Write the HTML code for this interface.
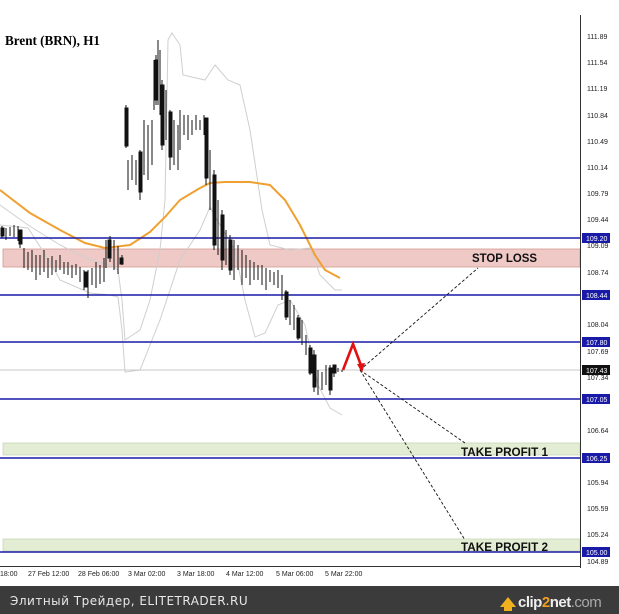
<!DOCTYPE html><html><head><style>
body{margin:0;width:619px;height:614px;overflow:hidden;background:#fff;font-family:"Liberation Sans",sans-serif}
</style></head><body>
<svg width="619" height="614" viewBox="0 0 619 614" xmlns="http://www.w3.org/2000/svg" style="position:absolute;left:0;top:0">
<rect x="0" y="0" width="619" height="586" fill="#fff"/>
<rect x="3" y="249" width="577" height="18" fill="#eec9c6" stroke="#d49a95" stroke-width="0.8"/>
<rect x="3" y="443" width="577" height="12" fill="#e3edd3" stroke="#c9d8b6" stroke-width="0.8"/>
<rect x="3" y="539" width="577" height="12" fill="#e3edd3" stroke="#c9d8b6" stroke-width="0.8"/>
<g fill="none" stroke="#cfcfcf" stroke-width="1">
<path d="M0,205 L28,225 L60,245 L90,260 L110,265 L118,270 L122,300 L125,340 L140,330 L150,300 L160,250 L165,200 L168,40 L172,33 L180,45 L183,75 L205,80 L215,65 L228,80 L240,85 L250,130 L262,210 L270,245 L290,250 L310,248 L320,275 L335,290 L342,290"/>
<path d="M0,225 L28,228 L50,262 L60,280 L90,293 L110,295 L118,297 L122,330 L125,372 L140,370 L160,320 L180,260 L200,230 L210,207 L220,225 L235,250 L245,300 L255,337 L265,333 L278,305 L290,300 L305,325 L318,385 L330,408 L342,415"/>
</g>
<path d="M0,190 L30,213 L60,230 L85,243 L105,248 L130,245 L150,232 L165,217 L180,200 L200,188 L210,183 L225,182 L250,182 L270,185 L285,200 L300,225 L315,255 L325,270 L340,278" fill="none" stroke="#f0a030" stroke-width="2"/>
<g stroke="#1a1aa8" stroke-width="1.6">
<line x1="0" y1="238" x2="580" y2="238"/><line x1="0" y1="295" x2="580" y2="295"/>
<line x1="0" y1="342" x2="580" y2="342"/><line x1="0" y1="399" x2="580" y2="399"/>
<line x1="0" y1="458" x2="580" y2="458"/><line x1="0" y1="552" x2="580" y2="552"/>
</g>
<line x1="0" y1="370" x2="580" y2="370" stroke="#c8c8c8" stroke-width="1"/>
<g stroke="#111" stroke-width="1" fill="#111">
<path d="M2,226V238M6,228V240M10,227V236M14,225V237M18,226V241M20,230V248M24,248V268M28,252V270M32,250V272M36,255V280M40,255V275M44,250V272M48,258V278M52,256V275M56,260V272M60,255V270M64,262V274M68,262V275M72,265V278M76,264V275M80,267V282M84,270V290M88,270V298M92,268V285M96,262V288M100,265V284M104,258V282M106,240V268M110,236V262M114,240V270M118,246V274M122,255V265"/>
<path d="M126,105V148M128,160V190M132,155V180M136,160V185M140,150V200M144,120V175M148,125V180M152,120V165M154,60V110M156,55V105M158,40V105M160,50V115M162,80V150M166,90V140M170,110V170M174,120V165M178,125V170M180,110V150M184,115V135M188,115V140M192,120V135M196,115V130M200,120V130M204,115V135M206,120V185M210,150V210M214,170V250M218,200V255M222,210V270M226,230V265M230,235V275M234,240V280M238,245V270M242,250V285M246,255V278M250,260V285M254,262V280M258,265V280M262,265V285M266,268V290M270,270V282M274,272V285M278,270V288M282,275V300M286,290V320M290,300V325M294,305V330M298,315V340M302,320V345M306,335V355M310,345V375M314,350V392M318,370V395M322,372V390M326,365V385M330,365V395M334,365V377M338,368V372M342,370V372"/>
<rect x="1" y="228" width="3" height="8"/><rect x="19" y="230" width="3" height="14"/><rect x="84" y="272" width="3" height="15"/><rect x="108" y="240" width="3" height="18"/><rect x="120" y="258" width="3" height="6"/>
<rect x="125" y="108" width="3" height="38"/><rect x="139" y="152" width="3" height="40"/><rect x="155" y="60" width="3" height="40"/><rect x="161" y="85" width="3" height="60"/><rect x="169" y="112" width="3" height="45"/><rect x="205" y="118" width="3" height="60"/><rect x="213" y="175" width="3" height="70"/><rect x="221" y="215" width="3" height="45"/><rect x="229" y="240" width="3" height="30"/><rect x="285" y="292" width="3" height="25"/><rect x="297" y="318" width="3" height="20"/><rect x="309" y="348" width="3" height="25"/><rect x="313" y="355" width="3" height="32"/><rect x="329" y="368" width="3" height="22"/><rect x="333" y="365" width="3" height="8"/>
</g>
<g stroke="#111" stroke-width="0.9" stroke-dasharray="3,2" fill="none">
<line x1="360" y1="370" x2="478" y2="268"/>
<line x1="360" y1="370" x2="465" y2="443"/>
<line x1="360" y1="370" x2="465" y2="540"/>
</g>
<path d="M343,370 L353,344 L362,368" fill="none" stroke="#e21010" stroke-width="2.6"/>
<path d="M357,364 L362,373 L365,363 Z" fill="#e21010"/>
<text x="5" y="45" font-family="Liberation Serif,serif" font-weight="bold" font-size="14" textLength="95" lengthAdjust="spacingAndGlyphs">Brent (BRN), H1</text>
<g font-family="Liberation Sans,sans-serif" font-size="12" font-weight="bold" fill="#111">
<text x="472" y="262" textLength="65" lengthAdjust="spacingAndGlyphs">STOP LOSS</text>
<text x="461" y="456" textLength="87" lengthAdjust="spacingAndGlyphs">TAKE PROFIT 1</text>
<text x="461" y="551" textLength="87" lengthAdjust="spacingAndGlyphs">TAKE PROFIT 2</text>
</g>
<line x1="580.5" y1="15" x2="580.5" y2="568" stroke="#333"/>
<line x1="0" y1="566.5" x2="580" y2="566.5" stroke="#333"/>
<g font-size="7" fill="#222" font-family="Liberation Sans,sans-serif">
<text x="587" y="39">111.89</text><text x="587" y="65">111.54</text><text x="587" y="91">111.19</text><text x="587" y="118">110.84</text><text x="587" y="144">110.49</text><text x="587" y="170">110.14</text><text x="587" y="196">109.79</text><text x="587" y="222">109.44</text><text x="587" y="248">109.09</text><text x="587" y="275">108.74</text><text x="587" y="327">108.04</text><text x="587" y="354">107.69</text><text x="587" y="380">107.34</text><text x="587" y="433">106.64</text><text x="587" y="485">105.94</text><text x="587" y="511">105.59</text><text x="587" y="537">105.24</text><text x="587" y="564">104.89</text>
</g>
<g font-size="7" font-family="Liberation Sans,sans-serif">
<rect x="582" y="233" width="28" height="10" fill="#1a1aa8"/><text x="586" y="241" fill="#fff">109.20</text>
<rect x="582" y="290" width="28" height="10" fill="#1a1aa8"/><text x="586" y="298" fill="#fff">108.44</text>
<rect x="582" y="337" width="28" height="10" fill="#1a1aa8"/><text x="586" y="345" fill="#fff">107.80</text>
<rect x="582" y="365" width="28" height="10" fill="#111"/><text x="586" y="373" fill="#fff">107.43</text>
<rect x="582" y="394" width="28" height="10" fill="#1a1aa8"/><text x="586" y="402" fill="#fff">107.05</text>
<rect x="582" y="453" width="28" height="10" fill="#1a1aa8"/><text x="586" y="461" fill="#fff">106.25</text>
<rect x="582" y="547" width="28" height="10" fill="#1a1aa8"/><text x="586" y="555" fill="#fff">105.00</text>
</g>
<g font-size="7" fill="#222" font-family="Liberation Sans,sans-serif">
<text x="0" y="576">18:00</text><text x="28" y="576">27 Feb 12:00</text><text x="78" y="576">28 Feb 06:00</text><text x="128" y="576">3 Mar 02:00</text><text x="177" y="576">3 Mar 18:00</text><text x="226" y="576">4 Mar 12:00</text><text x="276" y="576">5 Mar 06:00</text><text x="325" y="576">5 Mar 22:00</text>
</g>
<rect x="0" y="586" width="619" height="28" fill="#3b3b3b"/>
<text x="10" y="605" font-size="12" fill="#e8e8e8" font-family="DejaVu Sans,sans-serif" letter-spacing="0.5">Элитный Трейдер, ELITETRADER.RU</text>
<path d="M500,607 L508,597 L516,607 L512,607 L512,611 L504,611 L504,607Z" fill="#f0b020"/>
<text x="518" y="607" font-size="15" font-weight="bold" fill="#eee" font-family="Liberation Sans,sans-serif" letter-spacing="-0.5">clip<tspan fill="#f0a020">2</tspan>net<tspan fill="#aaa" font-weight="normal">.com</tspan></text>
</svg>
</body></html>
